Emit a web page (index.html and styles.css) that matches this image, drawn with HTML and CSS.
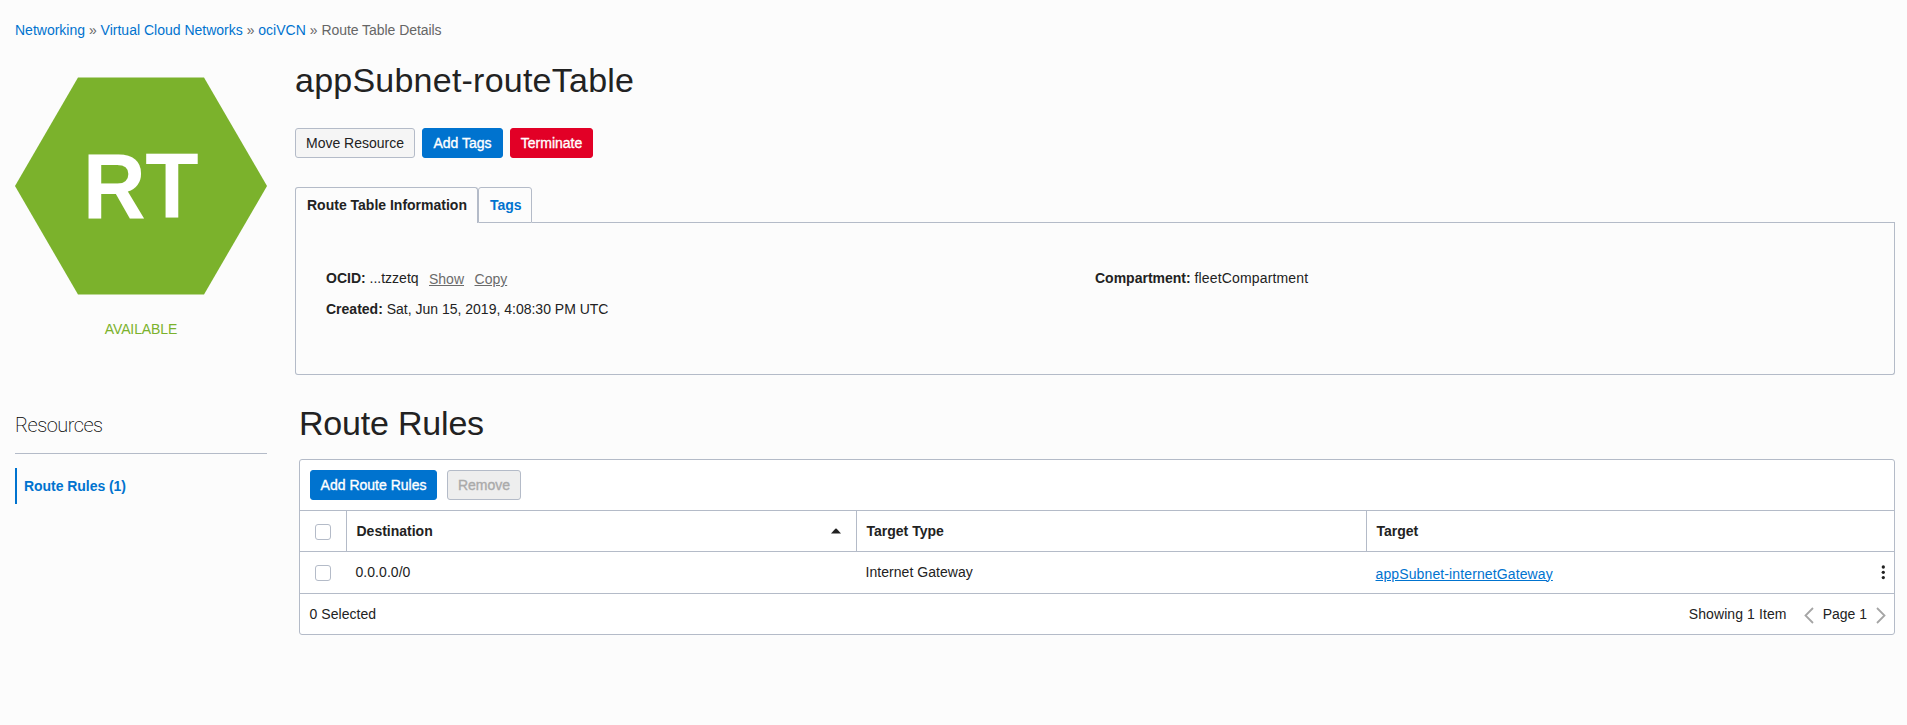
FILE: index.html
```html
<!DOCTYPE html>
<html lang="en">
<head>
<meta charset="utf-8">
<title>Route Table Details</title>
<link rel="stylesheet" href="styles.css">
</head>
<body>
<nav class="breadcrumb"><a href="#">Networking</a> » <a href="#">Virtual Cloud Networks</a> » <a href="#">ociVCN</a> » <span class="current">Route Table Details</span></nav>
<div class="layout">
  <aside class="sidebar">
    <svg class="hexagon" viewBox="0 0 252 218" role="img" aria-label="Route table, available">
      <polygon points="63,0.5 189,0.5 252,109 189,217.5 63,217.5 0,109" fill="#7bb22c"/>
      <text class="hexagon-text" transform="translate(67.7 141) scale(.95 1)" x="0" y="0">RT</text>
    </svg>
    <div class="status">AVAILABLE</div>
    <h2 class="resources-title">Resources</h2>
    <a class="resource-link" href="#">Route Rules (1)</a>
  </aside>
  <main class="content">
    <h1 class="title">appSubnet-routeTable</h1>
    <div class="actions">
      <button class="btn move">Move Resource</button>
      <button class="btn primary add-tags">Add Tags</button>
      <button class="btn danger">Terminate</button>
    </div>
    <div class="tabs">
      <div class="tab active">Route Table Information</div>
      <div class="tab tags">Tags</div>
      <div class="tab-fill"></div>
    </div>
    <section class="info">
      <div class="info-col">
        <p class="info-row"><b>OCID:</b> ...tzzetq <a class="mini show" href="#">Show</a><a class="mini copy" href="#">Copy</a></p>
        <p class="info-row"><b>Created:</b> Sat, Jun 15, 2019, 4:08:30 PM UTC</p>
      </div>
      <div class="info-col">
        <p class="info-row"><b>Compartment:</b> <span class="compartment">fleetCompartment</span></p>
      </div>
    </section>
    <section class="rules">
      <h1 class="rules-title">Route Rules</h1>
      <div class="table">
        <div class="toolbar">
          <button class="btn primary add-rules">Add Route Rules</button>
          <button class="btn disabled" disabled>Remove</button>
        </div>
        <div class="row head">
          <div class="cell check"><span class="box"></span></div>
          <div class="cell">Destination
            <svg class="sort" viewBox="0 0 10 6"><path d="M0 5.5 4.3.8Q5 .2 5.7.8L10 5.5Z" fill="#222"/></svg>
          </div>
          <div class="cell">Target Type</div>
          <div class="cell last">Target</div>
        </div>
        <div class="row body">
          <div class="cell check"><span class="box"></span></div>
          <div class="cell"><span class="value">0.0.0.0/0</span></div>
          <div class="cell"><span class="value">Internet Gateway</span></div>
          <div class="cell last"><a class="target" href="#">appSubnet-internetGateway</a>
            <svg class="dots" viewBox="0 0 4 15"><g fill="#222"><circle cx="2.3" cy="2" r="1.65"/><circle cx="2.3" cy="7.3" r="1.65"/><circle cx="2.3" cy="12.6" r="1.65"/></g></svg>
          </div>
        </div>
        <div class="footer">
          <span class="selected">0 Selected</span>
          <span class="showing">Showing 1 Item</span>
          <svg class="chev" viewBox="0 0 10 17"><path d="M9 1 1.5 8.5 9 16" fill="none" stroke="#a5a5a5" stroke-width="1.8"/></svg>
          <span class="page">Page 1</span>
          <svg class="chev" viewBox="0 0 10 17"><path d="M1 1 8.5 8.5 1 16" fill="none" stroke="#a5a5a5" stroke-width="1.8"/></svg>
        </div>
      </div>
    </section>
  </main>
</div>
</body>
</html>
```

FILE: styles.css
```css
* { box-sizing: border-box; }
body {
  margin: 0;
  padding: 0 12px 0 15px;
  height: 725px;
  background: #fcfcfc;
  color: #222;
  font-family: "Liberation Sans", Arial, sans-serif;
  font-size: 14px;
  line-height: 20px;
  white-space: nowrap;
}
a { color: #0073cf; text-decoration: none; }
h1, h2, p { margin: 0; font-weight: 400; }
.breadcrumb { padding-top: 20px; height: 60px; color: #666; }
.current { letter-spacing: -0.05px; }
.layout { display: grid; grid-template-columns: 252px 1600px; column-gap: 28px; }

.sidebar { padding-top: 17px; }
.hexagon { display: block; width: 252px; height: 218px; }
.hexagon-text { font-size: 92px; font-weight: 700; fill: #fff; letter-spacing: -0.5px; }
.status { margin-top: 24px; text-align: center; color: #7bb22c; letter-spacing: -0.1px; }
.resources-title {
  margin-top: 73px;
  height: 42px;
  border-bottom: 1px solid #b4bbc8;
  font-family: Roboto, "Liberation Sans", sans-serif;
  font-size: 20px;
  font-weight: 200;
  line-height: 26px;
  letter-spacing: -0.5px;
  color: #000;
}
.resource-link {
  display: block;
  margin-top: 14px;
  height: 36px;
  padding-left: 7px;
  border-left: 2px solid #0073cf;
  font-weight: 700;
  line-height: 36px;
  letter-spacing: -0.05px;
}

.title { height: 68px; font-size: 34px; line-height: 40px; letter-spacing: 0.23px; }
.actions { display: flex; gap: 7px; }
.btn {
  height: 30px;
  padding: 0;
  border: 1px solid #b4bbc8;
  border-radius: 3px;
  background: #f5f5f5;
  color: #222;
  font: 14px/28px "Liberation Sans", Arial, sans-serif;
}
.primary, .danger { color: #fff; -webkit-text-stroke: 0.35px #fff; }
.primary { border-color: #0073cf; background: #0073cf; }
.danger { width: 83px; border-color: #e20026; background: #e20026; }
.disabled { width: 74px; background: #eee; color: #aaa; -webkit-text-stroke: 0.35px #aaa; }
.move { width: 120px; }
.add-tags { width: 81px; }
.add-rules { width: 127px; }

.tabs { display: flex; height: 36px; margin-top: 29px; font-weight: 700; line-height: 35px; }
.tab { border: 1px solid #b4bbc8; border-radius: 3px 3px 0 0; }
.active { width: 183px; padding-left: 11px; border-bottom: 0; }
.tags { width: 54px; padding-left: 11px; color: #0073cf; }
.tab-fill { flex: 1; border-bottom: 1px solid #b4bbc8; }
.info {
  display: grid;
  grid-template-columns: 769px 1fr;
  height: 152px;
  padding: 40px 0 0 30px;
  border: 1px solid #b4bbc8;
  border-top: 0;
  border-radius: 0 0 3px 3px;
}
.info-row { height: 31px; line-height: 31px; }
.compartment { letter-spacing: 0.15px; }
.mini { position: relative; top: 1px; color: #6b6b6b; text-decoration: underline; }
.show { margin-left: 6.5px; }
.copy { margin-left: 10.5px; }

.rules { padding: 28px 0 0 4px; }
.rules-title { height: 56px; font-size: 34px; line-height: 40px; letter-spacing: -0.2px; }
.table { border: 1px solid #b4bbc8; border-radius: 3px; background: #fff; }
.toolbar { display: flex; gap: 10px; height: 50px; padding: 10px; }
.row { display: grid; grid-template-columns: 47px 510px 510px 1fr; border-top: 1px solid #b4bbc8; }
.head { height: 41px; font-weight: 700; }
.body { height: 42px; }
.cell { display: flex; align-items: center; justify-content: space-between; padding: 0 15px 0 9.5px; }
.head .cell { border-right: 1px solid #b4bbc8; }
.head .last { border-right: 0; }
.body .cell { padding-left: 8.5px; }
.row .check { padding: 0 0 0 15px; }
.box { width: 16px; height: 16px; margin-top: 1px; border: 1px solid #b4bbc8; border-radius: 3px; }
.sort { width: 10px; height: 6px; }
.value { margin-bottom: 1px; letter-spacing: 0.05px; }
.target { margin-top: 2px; letter-spacing: 0.12px; text-decoration: underline; }
.dots { width: 4px; height: 15px; margin-right: -6px; }
.footer { display: flex; align-items: center; height: 41px; padding: 0 8px 0 9.5px; border-top: 1px solid #b4bbc8; }
.selected { flex: 1; letter-spacing: 0.05px; }
.chev { width: 10px; height: 17px; margin-top: 3px; }
.showing { margin-right: 17px; letter-spacing: 0.1px; }
.page { margin: 0 9px; }
```
